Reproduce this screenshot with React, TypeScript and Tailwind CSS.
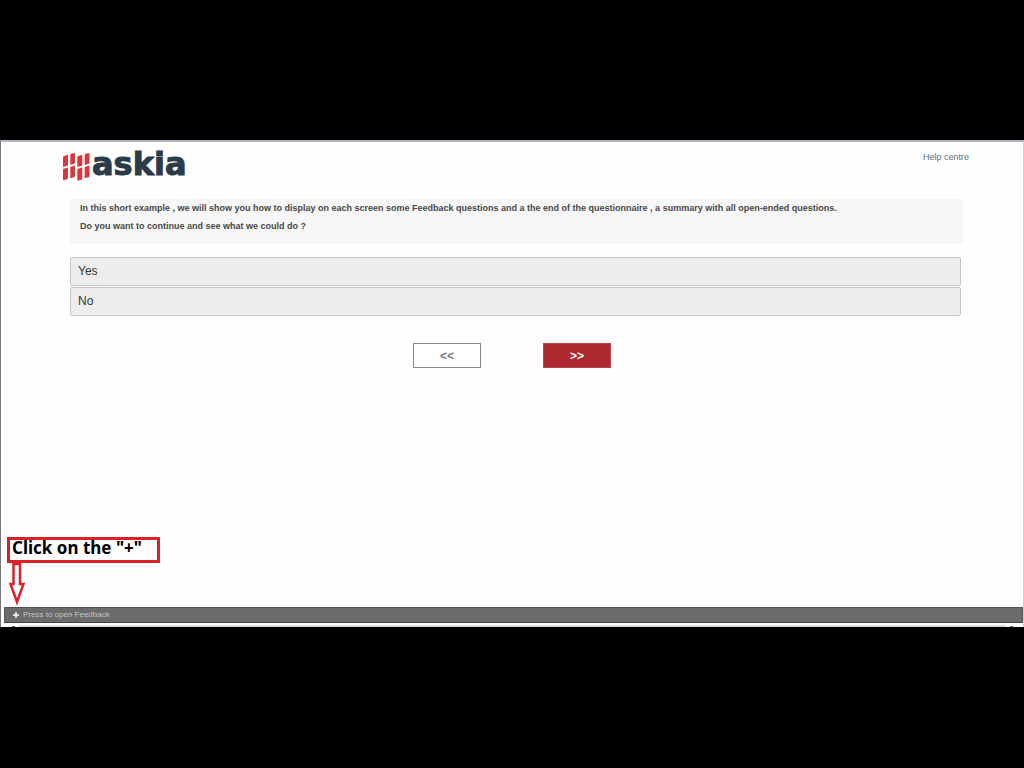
import { useState } from "react";
import type { ReactNode } from "react";

function LogoMark() {
  return (
    <svg viewBox="0 0 27 28" className="h-7 w-[27px] shrink-0" fill="#d8383d" aria-hidden="true">
      <path d="M0 4.2Q0 3.2 1 2.9L5 1.8V12.5L0 14Z" />
      <path d="M0 16L5 14.5V25Q5 26 4 26.3L0 27.3Z" />
      <path d="M7.3 2Q7.3 1 8.3 .8L12 0V10.5L7.3 12Z" />
      <path d="M7.3 14L12 12.5V23Q12 24 11 24.3L7.3 25.3Z" />
      <path d="M14.3 4.2Q14.3 3.2 15.3 2.9L19.3 1.8V12.5L14.3 14Z" />
      <path d="M14.3 16L19.3 14.5V25.5Q19.3 26.5 18.3 26.8L14.3 27.8Z" />
      <path d="M21.7 2Q21.7 1 22.7 .8L26.5 0V10.5L21.7 12Z" />
      <path d="M21.7 14L26.5 12.5V23Q26.5 24 25.5 24.3L21.7 25.3Z" />
    </svg>
  );
}

function Choice({ children, selected, onClick }: { children: ReactNode; selected: boolean; onClick: () => void }) {
  return (
    <button
      type="button"
      aria-pressed={selected}
      onClick={onClick}
      className="h-[29px] w-full rounded-[2px] border border-[#c5c7c7] bg-[#ededed] px-[7px] pb-px text-left text-[12px] leading-4 text-[#333]"
    >
      {children}
    </button>
  );
}

export default function App() {
  const [answer, setAnswer] = useState("");

  return (
    <div className="flex min-h-screen flex-col justify-center bg-black pb-px font-['Liberation_Sans',Arial,sans-serif]">
      <main className="flex min-h-[487px] flex-col border-t-2 border-r border-l border-t-[#b4b2bc] border-r-[#c9d1df] border-l-[#77777b] bg-[#fefefe]">
        <header className="flex items-start justify-between pt-2 pr-[54px] pl-[62px]">
          <a href="#home" className="flex h-[34px] items-start gap-0.5 pt-[3px] text-[#2b3b48]">
            <LogoMark />
            <span className="font-['DejaVu_Sans',sans-serif] text-[32px] leading-[22px] font-bold [-webkit-text-stroke:1px_#2b3b48]">askia</span>
          </a>
          <a href="#help" className="text-[9px] leading-[14px] text-[#66717c]">Help centre</a>
        </header>

        <section className="mt-[15px] mr-[60px] ml-[69px] h-[45px] bg-[#f7f7f7] px-2.5 text-[9px] leading-[18px] font-bold text-[#484848]">
          <p>
            In this short example , we will show you how to display on each screen some Feedback questions and a the end of the questionnaire , a summary with all open-ended questions.
          </p>
          <p>Do you want to continue and see what we could do ?</p>
        </section>

        <div className="mt-[13px] mr-[62px] ml-[69px] flex flex-col gap-px">
          <Choice selected={answer === "yes"} onClick={() => setAnswer("yes")}>Yes</Choice>
          <Choice selected={answer === "no"} onClick={() => setAnswer("no")}>No</Choice>
        </div>

        <nav className="mt-[27px] flex justify-center gap-[62px] text-[12px] leading-4 font-bold">
          <button type="button" className="h-[25px] w-[68px] border border-[#858585] bg-white text-[#777]">&lt;&lt;</button>
          <button type="button" className="h-[25px] w-[68px] border border-[#b9444b] bg-[#ae282f] text-white">&gt;&gt;</button>
        </nav>

        <div className="mt-auto flex flex-col items-start pl-1.5">
          <p className="h-[26px] w-[153px] border-[3px] border-[#dc2026] pl-0.5 font-['Noto_Sans',sans-serif] text-[17px] leading-4 font-bold whitespace-nowrap text-black">
            Click on the "+"
          </p>
          <svg viewBox="0 0 18 44" className="h-11 w-[18px]" fill="white" stroke="#dc2026" strokeWidth="2.5" aria-hidden="true">
            <path d="M6.5 1H13V21H16.5L10 39L3.5 21H6.5Z" />
          </svg>
        </div>

        <footer className="pl-[3px]">
          <button
            type="button"
            className="flex h-4 w-full items-center gap-1 rounded-[1px] border border-t-[#555] border-r-[#555] border-b-[#444] border-l-[#555] bg-[#6b6b6b] pl-2 text-[8px] leading-3 text-[#c4c4c4]"
          >
            <svg viewBox="0 0 6 6" className="size-1.5" stroke="white" strokeWidth="1.5" aria-hidden="true">
              <path d="M3 0V6M0 3H6" />
            </svg>
            Press to open Feedback
          </button>
          <div className="flex h-1 items-end justify-between pr-2.5 pl-2">
            <i className="h-px w-[3px] bg-[#666]" />
            <i className="mx-1 h-0.5 flex-1 bg-[#dddddf]" />
            <i className="h-px w-[3px] bg-[#666]" />
          </div>
        </footer>
      </main>
    </div>
  );
}
